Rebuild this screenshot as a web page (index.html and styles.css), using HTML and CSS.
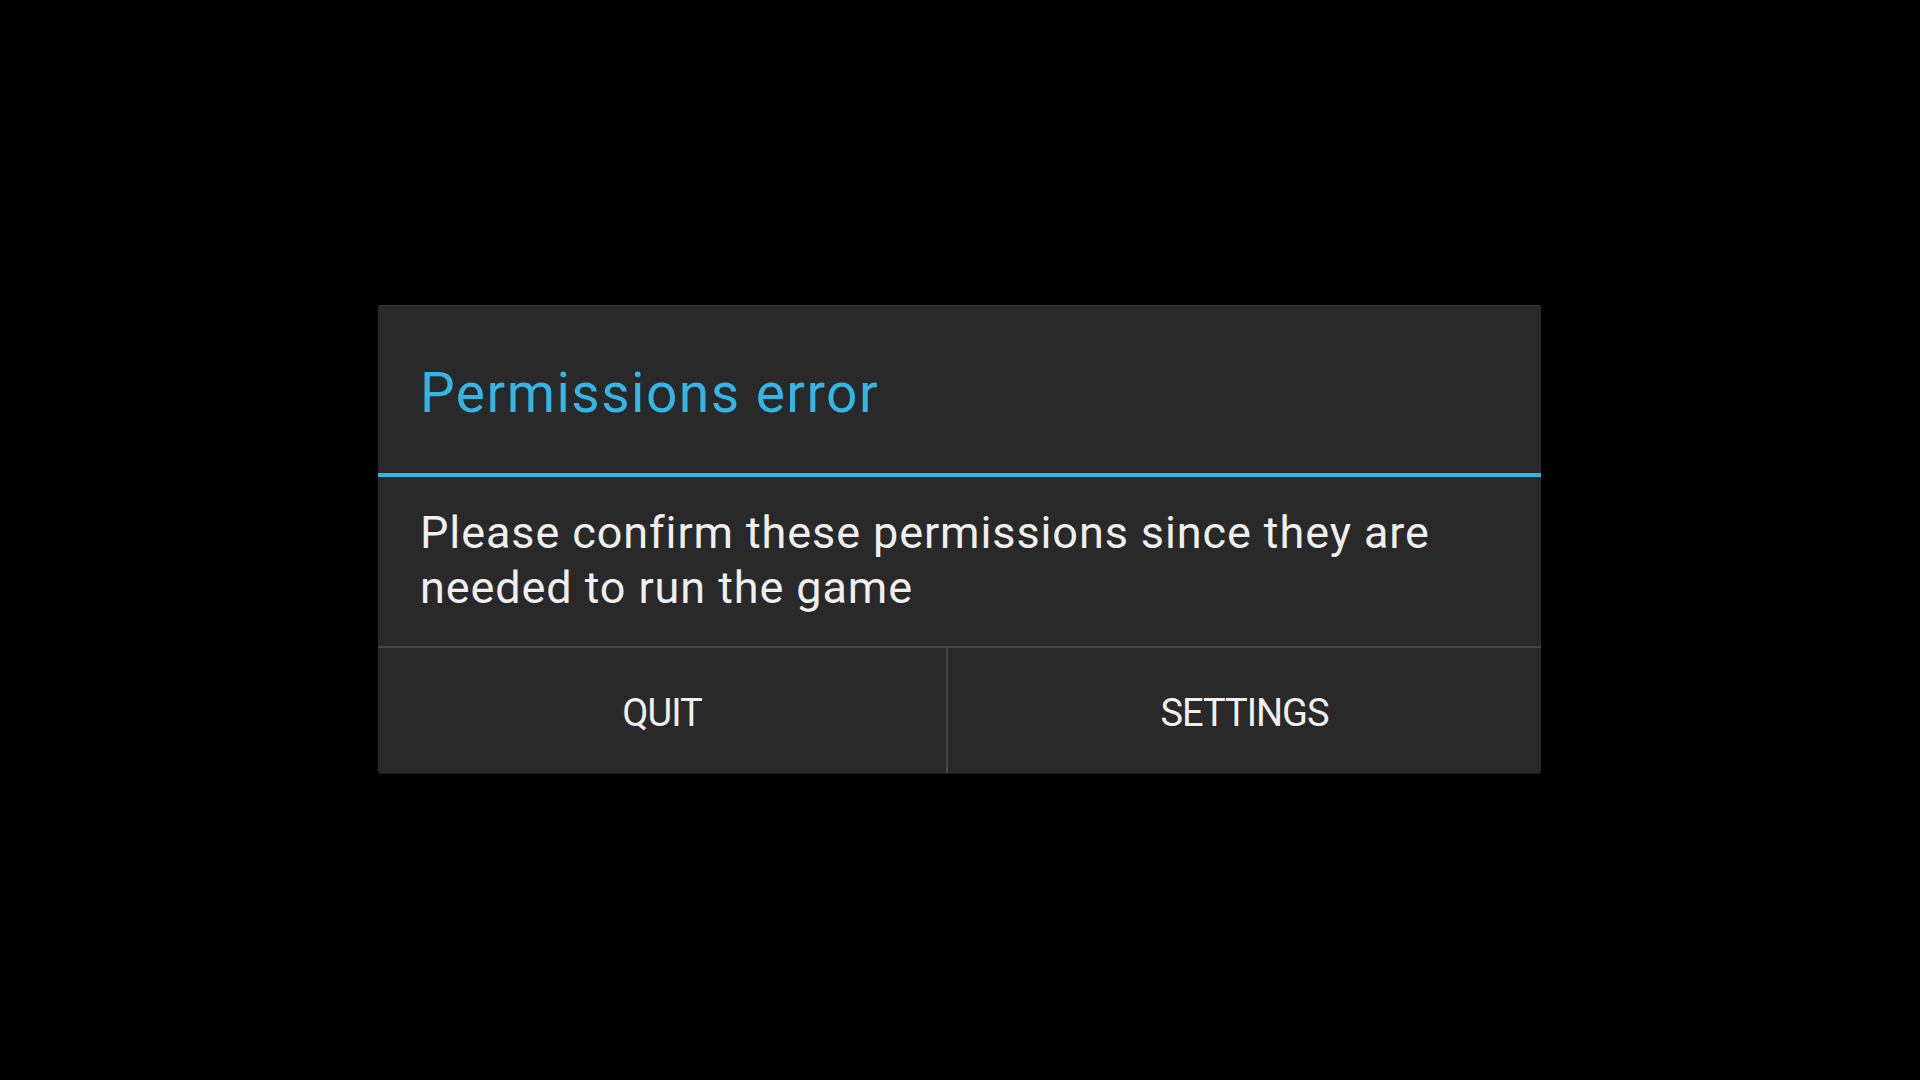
FILE: index.html
```html
<!DOCTYPE html>
<html lang="en">
<head>
<meta charset="utf-8">
<title>Permissions error</title>
<link rel="stylesheet" href="styles.css">
</head>
<body>
<div class="screen">
  <div class="dialog">
    <div class="dialog-title">Permissions error</div>
    <div class="dialog-rule"></div>
    <div class="dialog-body">Please confirm these permissions since they are needed to run the game</div>
    <div class="dialog-buttons">
      <div class="btn btn-quit">QUIT</div>
      <div class="btn btn-settings">SETTINGS</div>
    </div>
  </div>
</div>
</body>
</html>
```
FILE: styles.css
```css
html, body {
  margin: 0;
  padding: 0;
  background: #000;
}
.screen {
  width: 1920px;
  height: 1080px;
  display: flex;
  flex-direction: column;
  align-items: center;
  padding-top: 305px;
  padding-right: 1px;
  box-sizing: border-box;
}
.dialog {
  width: 1163px;
  background: #292929;
  border-radius: 3px;
  overflow: hidden;
  font-family: Roboto, "Noto Sans", sans-serif;
  box-shadow: inset 0 1px 0 #333, 0 1px 0 #1a1a1a;
}
.dialog-title {
  color: #33b5e5;
  font-size: 55px;
  letter-spacing: 1.5px;
  line-height: 64px;
  padding: 56px 42px 48px;
}
.dialog-rule {
  height: 4px;
  background: #33b5e5;
}
.dialog-body {
  color: #efefef;
  font-size: 45px;
  letter-spacing: 0.9px;
  line-height: 55px;
  padding: 28px 42px 31px;
}
.dialog-buttons {
  display: flex;
  border-top: 2px solid #474747;
  height: 125px;
}
.btn {
  display: flex;
  align-items: center;
  justify-content: center;
  color: #f0f0f0;
  font-size: 38px;
  letter-spacing: -1px;
  padding-top: 4px;
  box-sizing: border-box;
}
.btn-quit {
  width: 570px;
  border-right: 2px solid #474747;
}
.btn-settings {
  flex: 1;
}
```
